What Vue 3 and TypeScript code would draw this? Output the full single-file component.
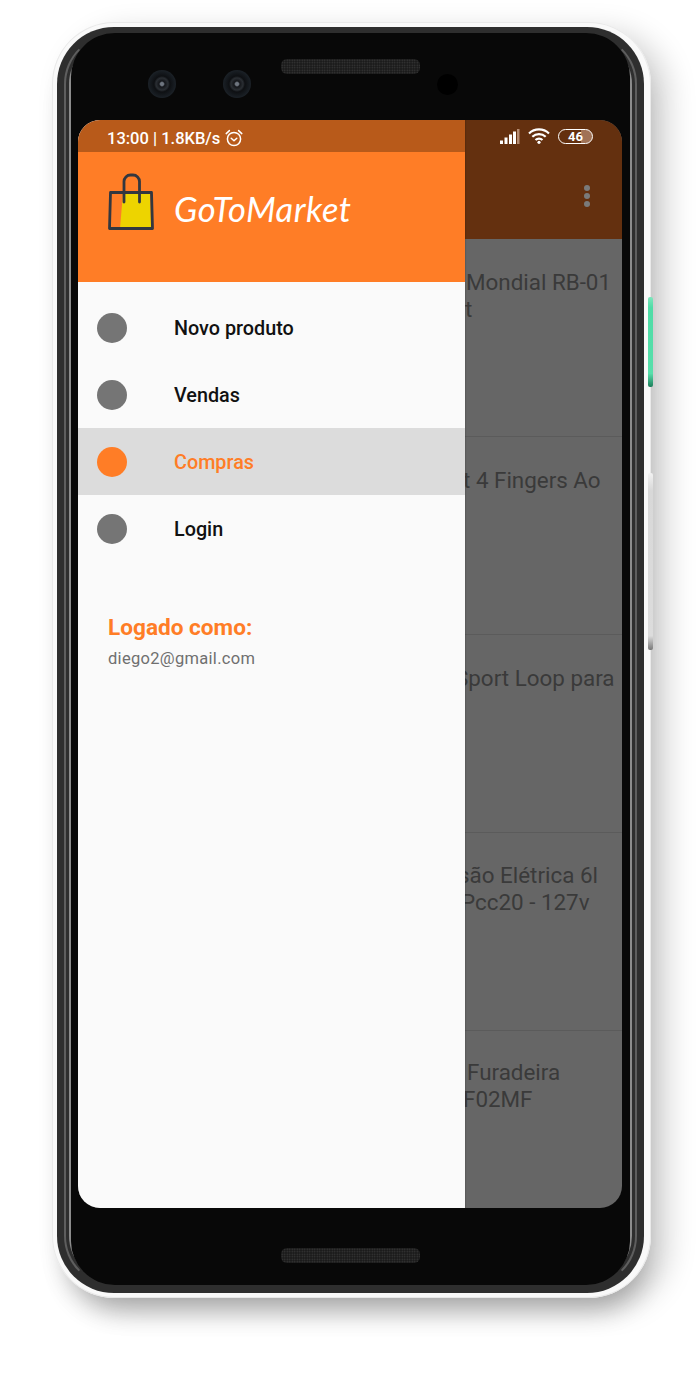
<script setup lang="ts">
interface MenuItem {
  label: string
  active?: boolean
}

const menu: MenuItem[] = [
  { label: 'Novo produto' },
  { label: 'Vendas' },
  { label: 'Compras', active: true },
  { label: 'Login' }
]

// what stays visible of each product title beside the open drawer, x = shift under the drawer
const products: { top: number; lines: { text: string; x: number }[] }[] = [
  { top: 30, lines: [{ text: 'Mondial RB-01', x: 1 }, { text: 't', x: 0 }] },
  { top: 30, lines: [{ text: 't 4 Fingers Ao', x: -2 }] },
  { top: 30, lines: [{ text: 'Sport Loop para', x: -10 }] },
  { top: 29, lines: [{ text: 'são Elétrica 6l', x: -7 }, { text: 'Pcc20 - 127v', x: -4 }] },
  { top: 28, lines: [{ text: 'Furadeira', x: 2 }, { text: 'F02MF', x: -2 }] }
]
</script>

<template>
  <div class="page">
    <div class="shell">
      <span class="side-btn green"></span>
      <span class="side-btn silver"></span>
      <div class="rim">
        <span class="rim-line outer"></span>
        <span class="rim-line inner"></span>
        <div class="face">
          <div class="top-bezel">
            <span class="camera"></span>
            <span class="camera second"></span>
            <span class="speaker top"></span>
            <span class="sensor"></span>
          </div>

          <div class="screen">
            <aside class="drawer">
              <div class="status-left">
                <span class="clock">13:00 | 1.8KB/s</span>
                <svg class="alarm" viewBox="0 0 18 18" width="18" height="18" fill="none" stroke="#fff" stroke-width="1.5">
                  <circle cx="9" cy="10" r="6.6" />
                  <path d="M6.2 9.2 9 11.8l2.8-2.6" stroke-linecap="round" stroke-linejoin="round" />
                  <path d="M1.2 4.6 4.4 1.6M16.8 4.6l-3.2-3" stroke-linecap="round" />
                </svg>
              </div>
              <div class="brand">
                <svg class="bag" viewBox="0 0 46 58" width="46" height="58" fill="none">
                  <path d="M15 19.5h27l1 36H12z" fill="#edd400" />
                  <path d="M2.5 19.5h41l1 36H1.5z" stroke="#33373f" stroke-width="2.8" stroke-linejoin="round" />
                  <path d="M16 29V8.500a6.500 6.500 0 0 1 6.500-6.500h2.500a6.500 6.500 0 0 1 6.500 6.500V29" stroke="#33373f" stroke-width="2.8" stroke-linecap="round" />
                </svg>
                <span class="brand-name">GoToMarket</span>
              </div>
              <nav class="menu">
                <div v-for="item in menu" :key="item.label" class="menu-row" :class="{ active: item.active }">
                  <span class="dot"></span>
                  <span class="menu-label">{{ item.label }}</span>
                </div>
              </nav>
              <div class="account">
                <div class="account-title">Logado como:</div>
                <div class="account-mail">diego2@gmail.com</div>
              </div>
            </aside>

            <div class="peek">
              <div class="status-right">
                <svg viewBox="0 0 21 15" width="21" height="15" fill="#fff">
                  <rect x="1" y="11.500" width="3" height="3.500" />
                  <rect x="5.500" y="8.500" width="3" height="6.500" />
                  <rect x="10" y="5.500" width="3" height="9.500" />
                  <rect x="14" y="2.500" width="3" height="12.500" />
                  <rect x="18" y="0" width="2.500" height="15" fill="#b58c72" />
                </svg>
                <svg class="wifi" viewBox="0 0 22 16" width="22" height="16" fill="none" stroke="#fff" stroke-width="2.2">
                  <path d="M1 5.500c5.600-5.400 14.400-5.400 20 0" />
                  <path d="M4.300 8.800c3.800-3.600 9.600-3.600 13.400 0" />
                  <path d="M7.500 12c1.900-1.800 5.100-1.800 7 0" />
                  <circle cx="11" cy="14.300" r="1.600" fill="#fff" stroke="none" />
                </svg>
                <span class="battery">46</span>
              </div>
              <div class="toolbar">
                <span class="kebab"><i></i><i></i><i></i></span>
              </div>
              <div class="list">
                <div
                  v-for="(p, i) in products"
                  :key="i"
                  class="product"
                  :style="{ paddingTop: p.top + 'px' }"
                >
                  <div
                    v-for="line in p.lines"
                    :key="line.text"
                    :style="{ marginLeft: line.x + 'px' }"
                  >{{ line.text }}</div>
                </div>
              </div>
            </div>
          </div>

          <div class="bottom-bezel">
            <span class="speaker"></span>
          </div>
        </div>
      </div>
    </div>
  </div>
</template>

<style>
html,
body {
  margin: 0;
  background: #fff;
}
</style>

<style scoped>
.page {
  width: 700px;
  height: 1377px;
  padding: 22px 0 0 52px;
  box-sizing: border-box;
  font-family: Roboto, 'Liberation Sans', sans-serif;
  overflow: hidden;
}

.shell {
  position: relative;
  width: 599px;
  height: 1276px;
  box-sizing: border-box;
  padding: 5px 7px 5px 5px;
  border-radius: 62px;
  background: #f9f9f9;
  box-shadow: inset 0 0 0 1px #e9e9e9, 16px 10px 30px rgba(0, 0, 0, 0.18), 4px 24px 26px -12px rgba(0, 0, 0, 0.24);
}

.side-btn {
  position: absolute;
  left: 596px;
  width: 5px;
  border-radius: 2px;
}

.side-btn.green {
  top: 275px;
  height: 90px;
  background: linear-gradient(#7fe6bd, #4fdca6 12%, #58dfab 85%, #1c7d5a);
}

.side-btn.silver {
  top: 451px;
  height: 177px;
  background: linear-gradient(#f2f2f2, #d8d8d8 10%, #dcdcdc 92%, #777);
}

.rim {
  position: relative;
  height: 100%;
  box-sizing: border-box;
  padding: 6px 14px 8px 14px;
  border-radius: 57px;
  background: #2e2e2e;
}

.rim-line {
  position: absolute;
  border: 2px solid;
  pointer-events: none;
}

.rim-line.outer {
  inset: 7px;
  border-radius: 50px;
  border-color: transparent #5e5e5e;
}

.rim-line.inner {
  inset: 12px;
  border-radius: 45px;
  border-color: transparent #8c8c8c;
}

.face {
  position: relative;
  height: 100%;
  display: flex;
  flex-direction: column;
  padding: 0 8px 0 7px;
  box-sizing: border-box;
  border-radius: 44px;
  background: #080808;
}

.top-bezel {
  height: 87px;
  flex: none;
  display: flex;
  align-items: center;
  padding: 15px 0 0 70px;
  box-sizing: border-box;
}

.camera {
  width: 28px;
  height: 28px;
  border-radius: 50%;
  background: radial-gradient(circle at 50% 50%, #6f7680 0 1.500px, #14161a 3px, #2a2e33 6px, #0e1013 8px, #1b2127 14px);
  margin-right: 47px;
}

.camera.second {
  margin-right: 30px;
}

.speaker {
  width: 139px;
  height: 15px;
  border-radius: 6px;
  background-color: #1b1b1b;
  background-image: radial-gradient(#3a3a3a 0.7px, transparent 0.9px);
  background-size: 2.500px 2.500px;
}

.speaker.top {
  align-self: flex-start;
  margin-top: 11px;
}

.sensor {
  width: 21px;
  height: 21px;
  margin-left: 17px;
  border-radius: 50%;
  background: #000;
}

.screen {
  height: 1088px;
  flex: none;
  display: flex;
  overflow: hidden;
  border-radius: 22px;
  background: #666;
}

.bottom-bezel {
  flex: 1;
  display: flex;
  justify-content: center;
  padding-top: 40px;
  box-sizing: border-box;
}

.drawer {
  position: relative;
  width: 387px;
  flex: none;
  background: #fafafa;
  box-shadow: 1px 0 1px rgba(0, 0, 0, 0.1);
}

.status-left {
  height: 32px;
  display: flex;
  align-items: center;
  gap: 5px;
  padding: 3px 0 0 29px;
  box-sizing: border-box;
  background: #b85a1a;
  color: #fff;
  font-size: 16.500px;
  font-weight: 500;
}

.clock {
  padding-top: 1px;
}

.brand {
  height: 130px;
  display: flex;
  align-items: flex-start;
  padding: 21px 0 0 30px;
  box-sizing: border-box;
  background: #ff7d26;
}

.bag {
  flex: none;
}

.brand-name {
  margin: 15px 0 0 20px;
  color: #fff;
  font-family: Lato, 'Open Sans', sans-serif;
  font-style: italic;
  font-size: 34.500px;
  letter-spacing: 0.5px;
}

.menu {
  padding-top: 12px;
}

.menu-row {
  height: 67px;
  display: flex;
  align-items: center;
  padding-left: 19px;
  color: #111;
  font-size: 19.800px;
  font-weight: 500;
}

.menu-label {
  padding-top: 1px;
}

.menu-row.active {
  background: #dcdcdc;
  color: #ff7d26;
}

.dot {
  width: 30px;
  height: 30px;
  margin-right: 47px;
  border-radius: 50%;
  background: #757575;
}

.menu-row.active .dot {
  background: #ff7d26;
}

.account {
  padding: 52px 0 0 30px;
}

.account-title {
  color: #ff7d26;
  font-size: 22.600px;
  font-weight: 700;
  line-height: 28px;
}

.account-mail {
  margin-top: 6px;
  color: #6f6f6f;
  font-size: 16.500px;
  line-height: 22px;
  letter-spacing: 0.3px;
}

.peek {
  flex: 1;
  min-width: 0;
  display: flex;
  flex-direction: column;
  overflow: hidden;
}

.status-right {
  height: 32px;
  flex: none;
  display: flex;
  align-items: center;
  padding-left: 34px;
  box-sizing: border-box;
  background: #64300f;
}

.wifi {
  margin-left: 8px;
}

.battery {
  width: 35px;
  height: 15px;
  margin-left: 8px;
  box-sizing: border-box;
  border: 1.500px solid #fff;
  border-radius: 8px;
  color: #fff;
  background: linear-gradient(90deg, transparent 68%, #a07256 68%);
  font-size: 13px;
  font-weight: 700;
  line-height: 13px;
  text-align: center;
}

.toolbar {
  height: 87px;
  flex: none;
  display: flex;
  align-items: center;
  justify-content: flex-end;
  padding-right: 32px;
  box-sizing: border-box;
  background: #64300f;
}

.kebab {
  display: flex;
  flex-direction: column;
  gap: 2px;
}

.kebab i {
  width: 6px;
  height: 6px;
  border-radius: 50%;
  background: #7a7a7a;
}

.list {
  flex: 1;
}

.product {
  height: 198px;
  box-sizing: border-box;
  border-bottom: 1px solid #5b5b5b;
  color: #3a3a3a;
  font-size: 22.400px;
  line-height: 27px;
  white-space: nowrap;
}
</style>
